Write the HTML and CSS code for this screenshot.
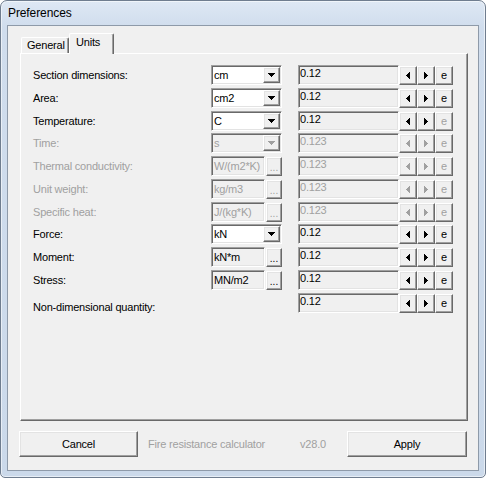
FILE: index.html
```html
<!DOCTYPE html>
<html>
<head>
<meta charset="utf-8">
<title>Preferences</title>
<link rel="stylesheet" href="styles.css">
</head>
<body>
<div class="window">
  <div class="titlebar">Preferences</div>
  <div class="client">
    <div class="tabs">
      <div class="tab">General</div>
      <div class="tab active">Units</div>
    </div>
    <div class="panel">
      <div class="row">
        <div class="label">Section dimensions:</div>
        <div class="combo sunken"><span class="val">cm</span><span class="drop raised"><svg width="7" height="4" viewBox="0 0 7 4"><path d="M0 0h7v1h-7zM1 1h5v1h-5zM2 2h3v1h-3zM3 3h1v1h-1z"/></svg></span></div>
        <div class="num sunken">0.12</div>
        <div class="btns">
          <span class="sb raised"><svg width="4" height="7" viewBox="0 0 4 7"><path d="M3 0h1v7h-1zM2 1h1v5h-1zM1 2h1v3h-1zM0 3h1v1h-1z"/></svg></span>
          <span class="sb raised"><svg width="4" height="7" viewBox="0 0 4 7"><path d="M0 0h1v7h-1zM1 1h1v5h-1zM2 2h1v3h-1zM3 3h1v1h-1z"/></svg></span>
          <span class="sb raised">e</span>
        </div>
      </div>
      <div class="row">
        <div class="label">Area:</div>
        <div class="combo sunken"><span class="val">cm2</span><span class="drop raised"><svg width="7" height="4" viewBox="0 0 7 4"><path d="M0 0h7v1h-7zM1 1h5v1h-5zM2 2h3v1h-3zM3 3h1v1h-1z"/></svg></span></div>
        <div class="num sunken">0.12</div>
        <div class="btns">
          <span class="sb raised"><svg width="4" height="7" viewBox="0 0 4 7"><path d="M3 0h1v7h-1zM2 1h1v5h-1zM1 2h1v3h-1zM0 3h1v1h-1z"/></svg></span>
          <span class="sb raised"><svg width="4" height="7" viewBox="0 0 4 7"><path d="M0 0h1v7h-1zM1 1h1v5h-1zM2 2h1v3h-1zM3 3h1v1h-1z"/></svg></span>
          <span class="sb raised">e</span>
        </div>
      </div>
      <div class="row">
        <div class="label">Temperature:</div>
        <div class="combo sunken"><span class="val">C</span><span class="drop raised"><svg width="7" height="4" viewBox="0 0 7 4"><path d="M0 0h7v1h-7zM1 1h5v1h-5zM2 2h3v1h-3zM3 3h1v1h-1z"/></svg></span></div>
        <div class="num sunken">0.12</div>
        <div class="btns">
          <span class="sb raised"><svg width="4" height="7" viewBox="0 0 4 7"><path d="M3 0h1v7h-1zM2 1h1v5h-1zM1 2h1v3h-1zM0 3h1v1h-1z"/></svg></span>
          <span class="sb raised"><svg width="4" height="7" viewBox="0 0 4 7"><path d="M0 0h1v7h-1zM1 1h1v5h-1zM2 2h1v3h-1zM3 3h1v1h-1z"/></svg></span>
          <span class="sb raised off">e</span>
        </div>
      </div>
      <div class="row dis">
        <div class="label">Time:</div>
        <div class="combo sunken off-bg"><span class="val">s</span><span class="drop raised"><svg width="7" height="4" viewBox="0 0 7 4"><path d="M0 0h7v1h-7zM1 1h5v1h-5zM2 2h3v1h-3zM3 3h1v1h-1z"/></svg></span></div>
        <div class="num sunken">0.123</div>
        <div class="btns">
          <span class="sb raised"><svg width="4" height="7" viewBox="0 0 4 7"><path d="M3 0h1v7h-1zM2 1h1v5h-1zM1 2h1v3h-1zM0 3h1v1h-1z"/></svg></span>
          <span class="sb raised"><svg width="4" height="7" viewBox="0 0 4 7"><path d="M0 0h1v7h-1zM1 1h1v5h-1zM2 2h1v3h-1zM3 3h1v1h-1z"/></svg></span>
          <span class="sb raised">e</span>
        </div>
      </div>
      <div class="row dis">
        <div class="label">Thermal conductivity:</div>
        <div class="unit"><span class="tbox sunken">W/(m2*K)</span><span class="dots raised">...</span></div>
        <div class="num sunken">0.123</div>
        <div class="btns">
          <span class="sb raised"><svg width="4" height="7" viewBox="0 0 4 7"><path d="M3 0h1v7h-1zM2 1h1v5h-1zM1 2h1v3h-1zM0 3h1v1h-1z"/></svg></span>
          <span class="sb raised"><svg width="4" height="7" viewBox="0 0 4 7"><path d="M0 0h1v7h-1zM1 1h1v5h-1zM2 2h1v3h-1zM3 3h1v1h-1z"/></svg></span>
          <span class="sb raised">e</span>
        </div>
      </div>
      <div class="row dis">
        <div class="label">Unit weight:</div>
        <div class="unit"><span class="tbox sunken">kg/m3</span><span class="dots raised">...</span></div>
        <div class="num sunken">0.123</div>
        <div class="btns">
          <span class="sb raised"><svg width="4" height="7" viewBox="0 0 4 7"><path d="M3 0h1v7h-1zM2 1h1v5h-1zM1 2h1v3h-1zM0 3h1v1h-1z"/></svg></span>
          <span class="sb raised"><svg width="4" height="7" viewBox="0 0 4 7"><path d="M0 0h1v7h-1zM1 1h1v5h-1zM2 2h1v3h-1zM3 3h1v1h-1z"/></svg></span>
          <span class="sb raised">e</span>
        </div>
      </div>
      <div class="row dis">
        <div class="label">Specific heat:</div>
        <div class="unit"><span class="tbox sunken">J/(kg*K)</span><span class="dots raised">...</span></div>
        <div class="num sunken">0.123</div>
        <div class="btns">
          <span class="sb raised"><svg width="4" height="7" viewBox="0 0 4 7"><path d="M3 0h1v7h-1zM2 1h1v5h-1zM1 2h1v3h-1zM0 3h1v1h-1z"/></svg></span>
          <span class="sb raised"><svg width="4" height="7" viewBox="0 0 4 7"><path d="M0 0h1v7h-1zM1 1h1v5h-1zM2 2h1v3h-1zM3 3h1v1h-1z"/></svg></span>
          <span class="sb raised">e</span>
        </div>
      </div>
      <div class="row">
        <div class="label">Force:</div>
        <div class="combo sunken"><span class="val">kN</span><span class="drop raised"><svg width="7" height="4" viewBox="0 0 7 4"><path d="M0 0h7v1h-7zM1 1h5v1h-5zM2 2h3v1h-3zM3 3h1v1h-1z"/></svg></span></div>
        <div class="num sunken">0.12</div>
        <div class="btns">
          <span class="sb raised"><svg width="4" height="7" viewBox="0 0 4 7"><path d="M3 0h1v7h-1zM2 1h1v5h-1zM1 2h1v3h-1zM0 3h1v1h-1z"/></svg></span>
          <span class="sb raised"><svg width="4" height="7" viewBox="0 0 4 7"><path d="M0 0h1v7h-1zM1 1h1v5h-1zM2 2h1v3h-1zM3 3h1v1h-1z"/></svg></span>
          <span class="sb raised">e</span>
        </div>
      </div>
      <div class="row">
        <div class="label">Moment:</div>
        <div class="unit"><span class="tbox sunken">kN*m</span><span class="dots raised">...</span></div>
        <div class="num sunken">0.12</div>
        <div class="btns">
          <span class="sb raised"><svg width="4" height="7" viewBox="0 0 4 7"><path d="M3 0h1v7h-1zM2 1h1v5h-1zM1 2h1v3h-1zM0 3h1v1h-1z"/></svg></span>
          <span class="sb raised"><svg width="4" height="7" viewBox="0 0 4 7"><path d="M0 0h1v7h-1zM1 1h1v5h-1zM2 2h1v3h-1zM3 3h1v1h-1z"/></svg></span>
          <span class="sb raised">e</span>
        </div>
      </div>
      <div class="row">
        <div class="label">Stress:</div>
        <div class="unit"><span class="tbox sunken">MN/m2</span><span class="dots raised">...</span></div>
        <div class="num sunken">0.12</div>
        <div class="btns">
          <span class="sb raised"><svg width="4" height="7" viewBox="0 0 4 7"><path d="M3 0h1v7h-1zM2 1h1v5h-1zM1 2h1v3h-1zM0 3h1v1h-1z"/></svg></span>
          <span class="sb raised"><svg width="4" height="7" viewBox="0 0 4 7"><path d="M0 0h1v7h-1zM1 1h1v5h-1zM2 2h1v3h-1zM3 3h1v1h-1z"/></svg></span>
          <span class="sb raised">e</span>
        </div>
      </div>
      <div class="row">
        <div class="label low">Non-dimensional quantity:</div>
        <div class="unit"></div>
        <div class="num sunken">0.12</div>
        <div class="btns">
          <span class="sb raised"><svg width="4" height="7" viewBox="0 0 4 7"><path d="M3 0h1v7h-1zM2 1h1v5h-1zM1 2h1v3h-1zM0 3h1v1h-1z"/></svg></span>
          <span class="sb raised"><svg width="4" height="7" viewBox="0 0 4 7"><path d="M0 0h1v7h-1zM1 1h1v5h-1zM2 2h1v3h-1zM3 3h1v1h-1z"/></svg></span>
          <span class="sb raised">e</span>
        </div>
      </div>
    </div>
    <div class="footer">
      <div class="bigbtn raised">Cancel</div>
      <div class="status">Fire resistance calculator</div>
      <div class="version">v28.0</div>
      <div class="bigbtn raised">Apply</div>
    </div>
  </div>
</div>
</body>
</html>
```
FILE: styles.css
```css
* { box-sizing: border-box; }
html, body { margin: 0; padding: 0; }
body {
  font-family: "Liberation Sans", Arial, sans-serif;
  font-size: 11px;
  letter-spacing: -0.2px;
  color: #000;
  background: #fff;
}
.window {
  width: 486px;
  height: 478px;
  border: 1px solid #6f7d8f;
  border-radius: 7px 7px 5px 5px;
  background: linear-gradient(#dee8f4, #d0dded 26px, #cbd9ea);
  box-shadow: inset 0 0 0 1px rgba(255, 255, 255, 0.55);
  display: flex;
  flex-direction: column;
  overflow: hidden;
}
.titlebar {
  flex: none;
  height: 24px;
  line-height: 24px;
  padding-left: 7px;
  font-size: 12px;
  letter-spacing: -0.1px;
  color: #000;
}
.client {
  flex: none;
  margin: 0 6px;
  height: 446px;
  border: 1px solid #8e9aa9;
  background: #f0f0f0;
  display: flex;
  flex-direction: column;
}
.tabs {
  display: flex;
  align-items: flex-end;
  height: 20px;
  margin: 7px 0 0 13px;
}
.tab {
  height: 16px;
  width: 48px;
  padding-left: 5px;
  line-height: 14px;
  border: 1px solid;
  border-color: #fff #696969 transparent #fff;
  border-bottom: 0;
  border-radius: 2px 2px 0 0;
  box-shadow: inset -1px 0 #a0a0a0;
  background: #f0f0f0;
  white-space: nowrap;
}
.tab.active {
  position: relative;
  z-index: 1;
  width: 45px;
  height: 21px;
  margin-bottom: -1px;
  padding-left: 6px;
  padding-top: 1px;
  line-height: 15px;
}
.panel {
  width: 448px;
  height: 368px;
  margin-left: 12px;
  border: 1px solid;
  border-color: #fff #696969 #696969 #fff;
  box-shadow: inset -1px -1px #a0a0a0;
  padding: 11px 0 0 12px;
}
.row {
  display: flex;
  align-items: flex-start;
  height: 22.75px;
}
.label {
  width: 178px;
  line-height: 20px;
  white-space: nowrap;
}
.label.low { padding-top: 4px; }
.sunken {
  border: 1px solid;
  border-color: #a0a0a0 #fff #fff #a0a0a0;
  box-shadow: inset 1px 1px #696969, inset -1px -1px #e3e3e3;
}
.raised {
  border: 1px solid;
  border-color: #fff #696969 #696969 #fff;
  box-shadow: inset -1px -1px #a0a0a0, inset 1px 1px #e3e3e3;
  background: #f0f0f0;
}
.combo {
  display: flex;
  width: 71px;
  height: 20px;
  padding: 1px;
  background: #fff;
}
.combo.off-bg { background: #f0f0f0; }
.combo .val {
  flex: 1;
  padding-left: 1px;
  line-height: 16px;
}
.drop {
  width: 17px;
  height: 16px;
  display: flex;
  align-items: center;
  justify-content: center;
}
svg { display: block; fill: currentColor; }
.unit {
  display: flex;
  width: 71px;
  height: 20px;
}
.tbox {
  width: 54px;
  height: 20px;
  padding: 1px 0 0 2px;
  line-height: 16px;
  background: #f0f0f0;
  white-space: nowrap;
  overflow: hidden;
}
.dots {
  width: 16px;
  height: 19px;
  margin-left: 1px;
  margin-top: 1px;
  text-align: center;
  line-height: 20px;
  font-size: 10px;
  letter-spacing: 0;
}
.num {
  width: 101px;
  height: 20px;
  margin-left: 16px;
  padding: 1px 0 0 1px;
  line-height: 12px;
  background: #f0f0f0;
}
.btns {
  display: flex;
  margin-top: 1px;
}
.sb {
  width: 18px;
  height: 19px;
  display: flex;
  align-items: center;
  justify-content: center;
  line-height: 17px;
}
.off, .dis .label, .dis .val, .dis .tbox, .dis .dots, .dis .num, .dis .sb, .dis .drop {
  color: #a0a0a0;
}
.footer {
  display: flex;
  align-items: center;
  height: 26px;
  margin: 10px 0 0 11px;
}
.bigbtn {
  width: 119px;
  height: 26px;
  line-height: 24px;
  text-align: center;
}
.bigbtn:last-child { width: 120px; }
.status {
  width: 152px;
  margin-left: 10px;
  color: #a0a0a0;
}
.version {
  width: 47px;
  color: #a0a0a0;
}
```
